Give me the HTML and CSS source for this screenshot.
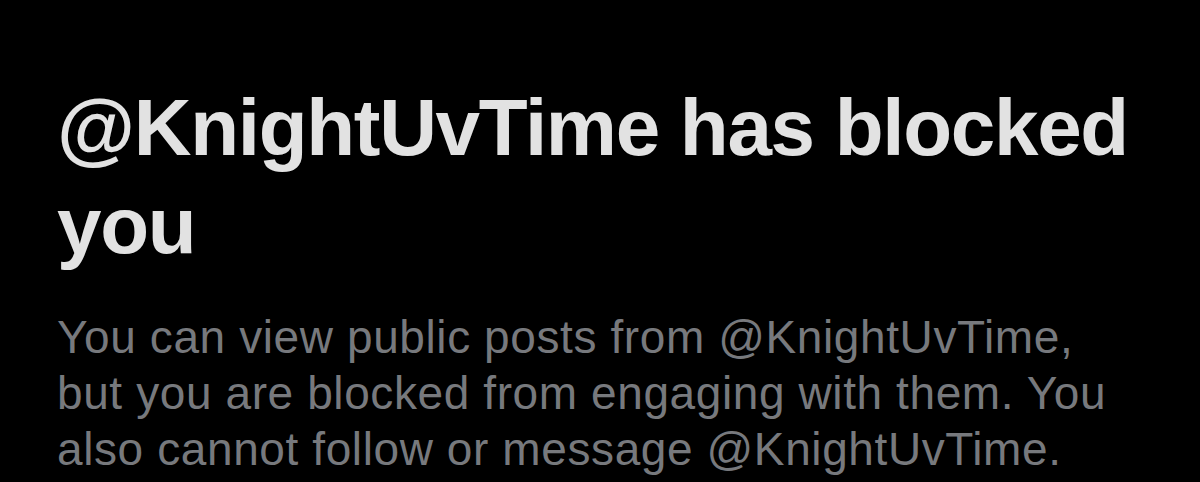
FILE: index.html
```html
<!DOCTYPE html>
<html>
<head>
<meta charset="utf-8">
<link rel="stylesheet" href="styles.css">
</head>
<body>
<main class="blocked">
  <h1 class="title">@KnightUvTime has blocked you</h1>
  <p class="desc">You can view public posts from @KnightUvTime, but you are blocked from engaging with them. You also cannot follow or message @KnightUvTime.</p>
</main>
</body>
</html>
```

FILE: styles.css
```css
html, body {
  margin: 0;
  padding: 0;
  background: #000;
  width: 1200px;
  height: 482px;
  overflow: hidden;
}
.blocked {
  padding: 79px 0 0 57px;
  width: 1100px;
}
.title {
  margin: 0;
  font-family: "Liberation Sans", Arial, sans-serif;
  font-weight: 700;
  font-size: 80px;
  line-height: 98px;
  color: #e2e2e2;
  letter-spacing: -1.3px;
}
.desc {
  margin: 34px 0 0 0;
  font-family: "Liberation Sans", Arial, sans-serif;
  font-weight: 400;
  font-size: 46px;
  line-height: 56px;
  color: #77797d;
  letter-spacing: 0.6px;
  width: 1085px;
}
```
